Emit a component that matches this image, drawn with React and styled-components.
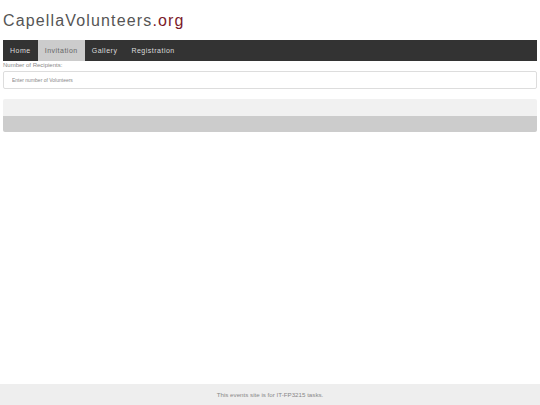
import React from 'react'
import styled, { createGlobalStyle } from 'styled-components'

const Global = createGlobalStyle`
  html, body {
    margin: 0;
    padding: 0;
    background: #fff;
    font-family: "Liberation Sans", Arial, sans-serif;
  }
`

const Page = styled.div`
  padding: 0 3px;
`

const Title = styled.h1`
  margin: 0;
  padding-top: 11px;
  height: 40px;
  box-sizing: border-box;
  font-size: 16px;
  line-height: 20px;
  font-weight: normal;
  letter-spacing: 1.15px;
  color: #555;
  span {
    color: #7b1a2a;
  }
`

const Nav = styled.ul`
  list-style: none;
  margin: 0;
  padding: 0;
  display: flex;
  height: 21px;
  background: #333;
`

const NavItem = styled.li`
  display: flex;
  align-items: center;
  padding: 0 7px;
  font-size: 7px;
  font-weight: 400;
  letter-spacing: 0.5px;
  color: ${p => (p.$active ? '#666' : '#dcdcdc')};
  background: ${p => (p.$active ? '#ccc' : 'transparent')};
`

const Label = styled.label`
  display: block;
  margin-top: 1px;
  font-size: 6px;
  color: #888;
`

const Input = styled.input`
  display: block;
  box-sizing: border-box;
  width: 100%;
  height: 18px;
  margin-top: 3px;
  padding: 0 8px;
  border: 1px solid #ddd;
  border-radius: 2px;
  font-family: inherit;
  font-size: 5px;
  color: #555;
  &::placeholder {
    color: #888;
  }
`

const Panel = styled.div`
  margin-top: 10px;
  border-radius: 2px;
  overflow: hidden;
`

const Band = styled.div`
  height: ${p => p.$h}px;
  background: ${p => p.$bg};
`

const Footer = styled.footer`
  position: fixed;
  left: 0;
  right: 0;
  bottom: 0;
  height: 21px;
  background: #eee;
  display: flex;
  align-items: center;
  justify-content: center;
  font-size: 6.2px;
  color: #888;
`

export default function App() {
  return (
    <>
      <Global />
      <Page>
        <Title>
          CapellaVolunteers<span>.org</span>
        </Title>
        <Nav>
          <NavItem>Home</NavItem>
          <NavItem $active>Invitation</NavItem>
          <NavItem>Gallery</NavItem>
          <NavItem>Registration</NavItem>
        </Nav>
        <Label>Number of Recipients:</Label>
        <Input placeholder="Enter number of Volunteers" />
        <Panel>
          <Band $h={17} $bg="#f1f1f1" />
          <Band $h={16} $bg="#ccc" />
        </Panel>
      </Page>
      <Footer>This events site is for IT-FP3215 tasks.</Footer>
    </>
  )
}
